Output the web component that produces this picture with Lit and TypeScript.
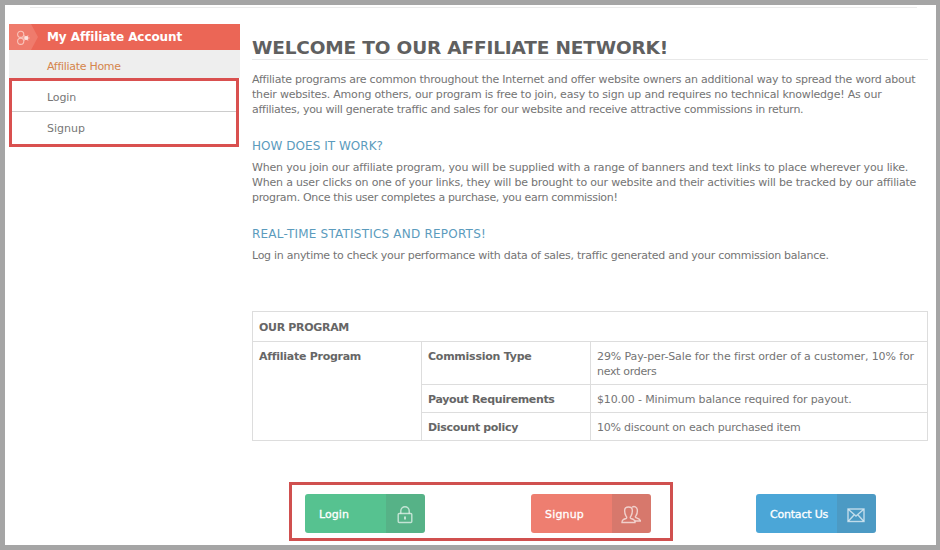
import { LitElement, html, css, svg } from "lit";
import { customElement, property } from "lit/decorators.js";

/** One line of text, tracked so that it fills a given measure. */
@customElement("text-line")
class TextLine extends LitElement {
  @property({ type: Number }) measure = 0;
  @property() text = "";
  static styles = css`
    :host { display: block; white-space: nowrap; }
  `;
  render() {
    return html`<span>${this.text}</span>`;
  }
  firstUpdated() {
    const span = this.renderRoot.querySelector("span") as HTMLElement;
    const natural = span.getBoundingClientRect().width;
    span.style.letterSpacing = `${(this.measure - natural) / this.text.length}px`;
  }
}

const line = (text: string, measure: number) =>
  html`<text-line .text=${text} .measure=${measure}></text-line>`;

const lockIcon = svg`<rect x="3.200" y="8.500" width="13.600" height="9" rx="1"/><path d="M5.800 8.500V6a4.200 4.300 0 0 1 8.400 0v2.500"/><path d="M10 11.500v3" stroke-width="2"/>`;
const usersIcon = svg`<path d="M1 17.500c0-2.500 1-3 4-4 1-.5 1-1.500 0-2.500C4 9.500 3.500 7.500 3.700 5c.2-4 7.400-4 7.600 0 .2 2.500-.3 4.500-1.300 6-1 1-1 2 0 2.500 3 1 4 1.500 4 4z"/><path d="M11 2.200c2-1.400 5.200-.6 5.300 2.800.2 2-.2 4-1.200 5.500-1 1-1 1.900.4 2.300 2.500.8 3.500 1.200 4 3.200h-5.500"/>`;
const mailIcon = svg`<rect x="2" y="4" width="16" height="12.500"/><path d="M2.500 4.500l7.500 6.500L17.500 4.500M2.500 16l5.500-6M17.500 16l-5.500-6"/>`;

@customElement("app-root")
class AppRoot extends LitElement {
  static styles = css`
    :host {
      display: block;
      font-family: "DejaVu Sans", Verdana, sans-serif;
      font-size: 11px;
      line-height: 15px;
      color: #747474;
    }
    * { box-sizing: border-box; }
    .frame {
      width: 940px;
      height: 550px;
      border: 5px solid #a5a5a5;
      border-right-width: 4px;
      background: #fff;
      overflow: hidden;
    }
    .rule { margin: 2px 19px 0 25px; height: 1px; background: #ececec; }
    .page { display: grid; grid-template-columns: 231px 676px; column-gap: 12px; padding: 16px 0 0 4px; }
    .side-head {
      display: flex;
      align-items: center;
      height: 26px;
      background: #eb6656;
      color: #fff;
      font-size: 12px;
      font-weight: bold;
    }
    .side-icon { width: 38px; height: 26px; flex: none; }
    .home { height: 28px; padding: 9px 0 0 38px; background: #eee; color: #d5854c; }
    .menu { border: 3px solid #d9504f; height: 69px; margin: 0 1px 0 0; }
    .menu div { height: 31px; padding: 9px 0 0 35px; color: #777; }
    .menu div:first-child { border-bottom: 1px solid #ccc; }
    h1 { margin: 13px 0 0; height: 23px; border-bottom: 1px solid #e8e8e8; font-size: 18.500px; line-height: 22px; color: #606060; }
    p { margin: 12px 0 0; }
    h2 { margin: 22px 0 0; font-size: 12px; line-height: 15px; font-weight: normal; color: #5b9bbd; }
    h2 + p { margin-top: 6px; }
    .program {
      display: grid;
      grid-template-columns: 169px 169px 337px;
      grid-template-rows: 30px 43px 28px 28px;
      width: 676px;
      margin-top: 48px;
      border: 1px solid #ddd;
      border-width: 1px 0 0 1px;
    }
    .program > div { padding: 7px 6px 0; border: 1px solid #ddd; border-width: 0 1px 1px 0; }
    .program .title { grid-column: 1 / 4; padding-top: 8px; }
    .program .name { grid-row: 2 / 5; }
    .b { font-weight: bold; color: #666; }
    .actions { display: flex; align-items: flex-start; gap: 83px; padding-left: 284px; margin-top: 41px; }
    .actions > .btn { margin-top: 12px; }
    .marked { display: flex; padding: 9px 19px 0 13px; width: 384px; height: 59px; border: 3px solid #d0504f; justify-content: space-between; }
    .btn { display: flex; width: 120px; height: 39px; border-radius: 3px; overflow: hidden; color: #fff; }
    .btn .label { flex: 1; padding: 13px 0 0 14px; -webkit-text-stroke: 0.3px #fff; }
    .btn .icon { width: 39px; padding: 11px 0 0 9px; background: rgba(90, 90, 90, 0.15); }
    .btn svg { display: block; width: 20px; height: 20px; fill: none; stroke: rgba(255, 255, 255, 0.65); stroke-width: 1.4; }
    .green { background: #56c290; }
    .red { background: #ee7e70; }
    .blue { background: #4ba6d7; }
  `;

  button(kind: string, label: string, measure: number, icon: unknown) {
    return html`<div class="btn ${kind}">
      <div class="label">${line(label, measure)}</div>
      <div class="icon"><svg viewBox="0 0 20 20">${icon}</svg></div>
    </div>`;
  }

  render() {
    return html`<div class="frame">
      <div class="rule"></div>
      <div class="page">
        <div class="side">
          <div class="side-head">
            <svg class="side-icon" viewBox="0 0 38 26">
              <path d="M0 0h22l7 13-7 13H0z" fill="#ef7b6c"/>
              <g fill="none" stroke="#f9c4bb" stroke-width="1.100">
                <circle cx="11.700" cy="10.300" r="3.100"/><circle cx="11.700" cy="17.300" r="3.100"/>
                <path d="M13.500 14h7M15.200 11.500l4 5M19.200 11.500l-4 5"/>
              </g>
              <circle cx="17.200" cy="14" r="2" fill="#fde3de"/>
            </svg>
            ${line("My Affiliate Account", 134)}
          </div>
          <div class="home">${line("Affiliate Home", 74)}</div>
          <div class="menu">
            <div>${line("Login", 29)}</div>
            <div>${line("Signup", 38)}</div>
          </div>
        </div>
        <div class="main">
          <h1>${line("WELCOME TO OUR AFFILIATE NETWORK!", 416)}</h1>
          <p>
            ${line("Affiliate programs are common throughout the Internet and offer website owners an additional way to spread the word about", 663.5)}
            ${line("their websites. Among others, our program is free to join, easy to sign up and requires no technical knowledge! As our", 629.5)}
            ${line("affiliates, you will generate traffic and sales for our website and receive attractive commissions in return.", 551)}
          </p>
          <h2>${line("HOW DOES IT WORK?", 131)}</h2>
          <p>
            ${line("When you join our affiliate program, you will be supplied with a range of banners and text links to place wherever you like.", 656)}
            ${line("When a user clicks on one of your links, they will be brought to our website and their activities will be tracked by our affiliate", 664)}
            ${line("program. Once this user completes a purchase, you earn commission!", 365.5)}
          </p>
          <h2>${line("REAL-TIME STATISTICS AND REPORTS!", 234)}</h2>
          <p>${line("Log in anytime to check your performance with data of sales, traffic generated and your commission balance.", 576.5)}</p>
          <div class="program">
            <div class="title b">${line("OUR PROGRAM", 90)}</div>
            <div class="name b">${line("Affiliate Program", 101)}</div>
            <div class="b">${line("Commission Type", 103.5)}</div>
            <div>${line("29% Pay-per-Sale for the first order of a customer, 10% for", 317)}${line("next orders", 59.5)}</div>
            <div class="b">${line("Payout Requirements", 126.5)}</div>
            <div>${line("$10.00 - Minimum balance required for payout.", 254.5)}</div>
            <div class="b">${line("Discount policy", 90)}</div>
            <div>${line("10% discount on each purchased item", 203.5)}</div>
          </div>
        </div>
      </div>
      <div class="actions">
        <div class="marked">
          ${this.button("green", "Login", 30, lockIcon)}
          ${this.button("red", "Signup", 39, usersIcon)}
        </div>
        ${this.button("blue", "Contact Us", 58, mailIcon)}
      </div>
    </div>`;
  }
}
